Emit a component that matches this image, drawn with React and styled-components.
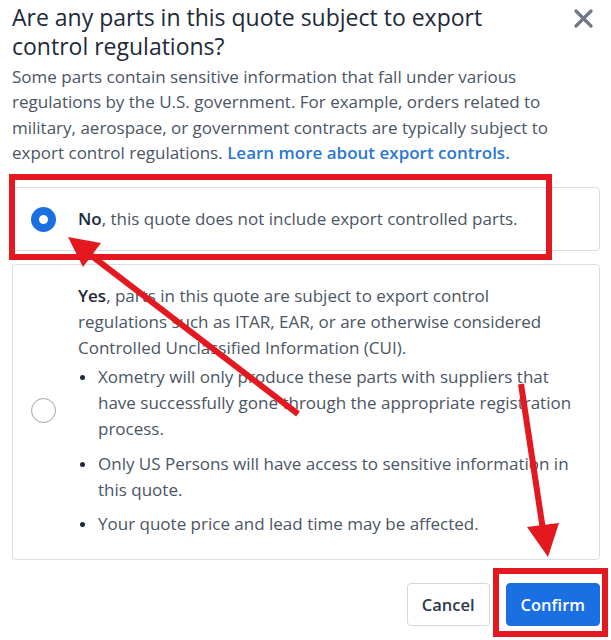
import React, { useState } from 'react'
import styled, { createGlobalStyle } from 'styled-components'

const Global = createGlobalStyle`
body {
  margin: 0;
  background: #ffffff;
  font-family: "Open Sans", "Noto Sans", sans-serif;
}
`

const Page = styled.div`
position: relative;
width: 611px;
height: 640px;
overflow: hidden;
`

const Modal = styled.div`
padding: 3px 11px 0 12px;
display: flex;
flex-direction: column;
`

const Header = styled.div`
display: flex;
justify-content: space-between;
align-items: flex-start;
`

const Title = styled.h2`
margin: 0;
font-size: 23px;
line-height: 29px;
font-weight: 500;
color: #1e2a3a;
width: 500px;
`

const Close = styled.button`
border: none;
background: none;
padding: 0;
margin: 6px 7px 0 0;
width: 19px;
height: 19px;
`

const Intro = styled.p`
margin: 3px 0 0;
width: 570px;
font-size: 17px;
line-height: 25.3px;
color: #4b5563;
`

const Link = styled.a`
color: #2a78d3;
font-weight: 600;
text-decoration: none;
`

const Options = styled.div`
margin-top: 22px;
display: flex;
flex-direction: column;
gap: 13px;
`

const Card = styled.label`
display: flex;
align-items: center;
gap: 22px;
border: 1px solid #d9dde3;
border-radius: 4px;
padding: ${p => p.$pad};
`

const Radio = styled.span`
flex: none;
width: 25px;
height: 25px;
box-sizing: border-box;
border-radius: 50%;
border: ${p => (p.$checked ? '8px solid #1a6fe3' : '1.5px solid #9ea3a9')};
background: #fff;
`

const Text = styled.div`
font-size: 17px;
line-height: 25.8px;
color: #4b5563;
`

const Strong = styled.b`
font-weight: 600;
color: #1e2a3a;
`

const List = styled.ul`
list-style: none;
margin: 4px 0 0;
padding: 0;
display: flex;
flex-direction: column;
gap: 9px;
`

const Item = styled.li`
display: flex;
`

const Dot = styled.span`
flex: none;
width: 20px;
display: flex;
padding-top: 11px;
padding-left: 2px;
box-sizing: border-box;
&::before {
  content: "";
  width: 5px;
  height: 5px;
  border-radius: 50%;
  background: #1e2a3a;
}
`

const Footer = styled.div`
margin-top: 23px;
display: flex;
justify-content: flex-end;
gap: 16px;
`

const Button = styled.button`
height: 43px;
padding: 0 14px;
border-radius: 4px;
font-family: "Open Sans", sans-serif;
font-size: 16.5px;
font-weight: 600;
border: 1px solid ${p => (p.$primary ? '#1a6fe3' : '#d3d8de')};
background: ${p => (p.$primary ? '#1a6fe3' : '#ffffff')};
color: ${p => (p.$primary ? '#ffffff' : '#2d3a4a')};
`

const Marks = styled.svg`
position: absolute;
top: 0;
left: 0;
pointer-events: none;
`

function App() {
  const [choice, setChoice] = useState('no')

  return (
    <Page>
      <Global />
      <Modal>
        <Header>
          <Title>Are any parts in this quote subject to export control regulations?</Title>
          <Close aria-label="Close">
            <svg width="19" height="19" viewBox="0 0 19 19">
              <path d="M2 2 L17 17 M17 2 L2 17" stroke="#6f7782" strokeWidth="3.2" strokeLinecap="round" />
            </svg>
          </Close>
        </Header>
        <Intro>
          Some parts contain sensitive information that fall under various regulations by the U.S.
          government. For example, orders related to military, aerospace, or government contracts
          are typically subject to export control regulations.{' '}
          <Link href="#">Learn more about export controls.</Link>
        </Intro>
        <Options>
          <Card $pad="18px 22px 18px 18px" onClick={() => setChoice('no')}>
            <Radio $checked={choice === 'no'} />
            <Text>
              <Strong>No</Strong>, this quote does not include export controlled parts.
            </Text>
          </Card>
          <Card $pad="18px 22px 22px 18px" onClick={() => setChoice('yes')}>
            <Radio $checked={choice === 'yes'} />
            <Text>
              <Strong>Yes</Strong>, parts in this quote are subject to export control regulations
              such as ITAR, EAR, or are otherwise considered Controlled Unclassified Information
              (CUI).
              <List>
                <Item>
                  <Dot />
                  <span>
                    Xometry will only produce these parts with suppliers that have successfully
                    gone through the appropriate registration process.
                  </span>
                </Item>
                <Item>
                  <Dot />
                  <span>Only US Persons will have access to sensitive information in this quote.</span>
                </Item>
                <Item>
                  <Dot />
                  <span>Your quote price and lead time may be affected.</span>
                </Item>
              </List>
            </Text>
          </Card>
        </Options>
        <Footer>
          <Button>Cancel</Button>
          <Button $primary>Confirm</Button>
        </Footer>
      </Modal>
      <Marks width="611" height="640" viewBox="0 0 611 640">
        <rect x="12" y="177" width="537" height="80" fill="none" stroke="#e3191f" strokeWidth="6" />
        <rect x="496" y="571" width="109" height="63" fill="none" stroke="#e3191f" strokeWidth="6" />
        <line x1="298" y1="414" x2="88" y2="253" stroke="#e3191f" strokeWidth="6" />
        <polygon points="68,237 101,243 83,267" fill="#e3191f" />
        <line x1="521" y1="384" x2="543" y2="530" stroke="#e3191f" strokeWidth="6" />
        <polygon points="548,557 559,523 527,527" fill="#e3191f" />
      </Marks>
    </Page>
  )
}

export default App
